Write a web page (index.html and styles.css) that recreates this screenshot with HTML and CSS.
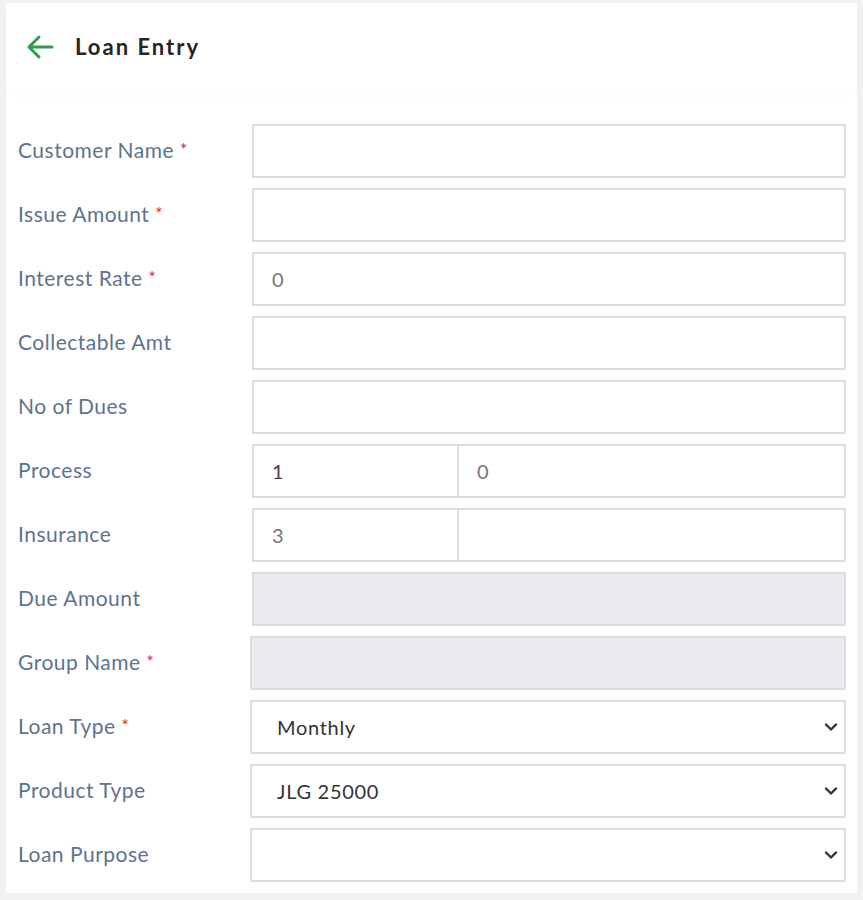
FILE: index.html
```html
<!DOCTYPE html>
<html lang="en">
<head>
<meta charset="utf-8">
<title>Loan Entry</title>
<link rel="stylesheet" href="styles.css">
</head>
<body>
<div class="page">
  <header class="topbar">
    <svg class="back" width="28" height="26" viewBox="0 0 28 26" aria-hidden="true">
      <path d="M26 13H3M13 3L3 13l10 10" fill="none" stroke="#2f9e46" stroke-width="3" stroke-linecap="round" stroke-linejoin="round"/>
    </svg>
    <h1 class="title">Loan Entry</h1>
  </header>
  <form class="form">
    <div class="row"><label class="lbl">Customer Name <span class="req">*</span></label><input class="field" type="text"></div>
    <div class="row"><label class="lbl">Issue Amount <span class="req">*</span></label><input class="field" type="text"></div>
    <div class="row"><label class="lbl">Interest Rate <span class="req">*</span></label><input class="field" type="text" value="0"></div>
    <div class="row"><label class="lbl">Collectable Amt</label><input class="field" type="text"></div>
    <div class="row"><label class="lbl">No of Dues</label><input class="field" type="text"></div>
    <div class="row"><label class="lbl">Process</label>
      <div class="split"><input class="field part1 dark" type="text" value="1"><input class="field part2" type="text" value="0"></div></div>
    <div class="row"><label class="lbl">Insurance</label>
      <div class="split"><input class="field part1" type="text" value="3"><input class="field part2" type="text"></div></div>
    <div class="row"><label class="lbl">Due Amount</label><input class="field disabled" type="text" readonly></div>
    <div class="row"><label class="lbl">Group Name <span class="req">*</span></label><input class="field disabled wide" type="text" readonly></div>
    <div class="row"><label class="lbl">Loan Type <span class="req">*</span></label>
      <div class="selwrap"><select class="field sel"><option>Monthly</option></select>
      <svg class="chev" width="14" height="10" viewBox="0 0 14 10"><path d="M2 2.5l5 5 5-5" fill="none" stroke="#333" stroke-width="2.4" stroke-linecap="round" stroke-linejoin="round"/></svg></div></div>
    <div class="row"><label class="lbl">Product Type</label>
      <div class="selwrap"><select class="field sel"><option>JLG 25000</option></select>
      <svg class="chev" width="14" height="10" viewBox="0 0 14 10"><path d="M2 2.5l5 5 5-5" fill="none" stroke="#333" stroke-width="2.4" stroke-linecap="round" stroke-linejoin="round"/></svg></div></div>
    <div class="row"><label class="lbl">Loan Purpose</label>
      <div class="selwrap"><select class="field sel"><option></option></select>
      <svg class="chev" width="14" height="10" viewBox="0 0 14 10"><path d="M2 2.5l5 5 5-5" fill="none" stroke="#333" stroke-width="2.4" stroke-linecap="round" stroke-linejoin="round"/></svg></div></div>
  </form>
</div>
</body>
</html>
```

FILE: styles.css
```css
* { box-sizing: border-box; }
html, body { margin: 0; padding: 0; }
body {
  background: #f1f1f2;
  font-family: Lato, "Open Sans", Arial, sans-serif;
  width: 863px;
  height: 900px;
  overflow: hidden;
}
.page {
  padding: 3px 6px 0 6px;
}
.topbar {
  height: 86px;
  background: #fff;
  display: flex;
  align-items: center;
  padding-left: 20px;
  box-shadow: 0 5px 8px rgba(0,0,0,0.02);
  position: relative;
  z-index: 1;
}
.back { flex: 0 0 auto; margin-top: 2px; }
.title {
  margin: 0 0 0 21px;
  font-size: 22px;
  font-weight: 700;
  color: #252525;
  letter-spacing: 2px;
}
.form {
  background: #fff;
  padding: 35px 11px 11px 12px;
  display: flex;
  flex-direction: column;
  gap: 10px;
}
.row {
  display: flex;
  align-items: center;
  height: 54px;
}
.lbl {
  width: 234px;
  flex: 0 0 234px;
  font-size: 21px;
  letter-spacing: 0.5px;
  color: #5d7390;
  margin-top: -3px;
}
.req { color: #d0262f; font-size: 17px; vertical-align: 2px; }
.field {
  flex: 1 1 auto;
  height: 54px;
  width: 100%;
  border: 2px solid #dcdcdc;
  background: #fff;
  font-family: Lato, "Open Sans", Arial, sans-serif;
  font-size: 20px;
  letter-spacing: 0.7px;
  color: #777;
  padding: 0 18px;
  outline: none;
  margin: 0;
}
.field.dark { color: #5a3a44; }
.split { flex: 1 1 auto; display: flex; height: 54px; }
.part1 { flex: 0 0 207px; width: 207px; }
.part2 { flex: 1 1 auto; border-left: 0; }
.disabled { background: #e9ebee; }
.wide { margin-left: -2px; width: calc(100% + 2px); flex-basis: calc(100% + 2px); }
.selwrap { flex: 1 1 auto; position: relative; margin-left: -2px; height: 54px; }
.sel {
  appearance: none;
  -webkit-appearance: none;
  color: #333;
  padding-left: 25px;
  border-radius: 0;
}
.chev { position: absolute; right: 8px; top: 22px; pointer-events: none; }
```
